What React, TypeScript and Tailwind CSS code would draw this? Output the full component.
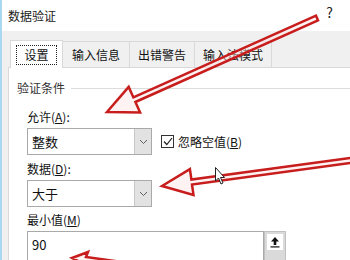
import React from "react";

const font = { fontFamily: '"Noto Sans CJK SC", "Noto Sans", sans-serif' };

function Chevron() {
  return (
    <svg width="9" height="6" viewBox="0 0 9 6">
      <path d="M1 1 L4.5 4.5 L8 1" fill="none" stroke="#606060" strokeWidth="1" />
    </svg>
  );
}

function Combo({ value }: { value: string }) {
  return (
    <div className="flex h-[27px] w-[125px] border border-[#a9a9a9] bg-white">
      <div className="flex-1 pl-[4px] flex items-center text-[13px] text-[#111]">{value}</div>
      <div className="w-[17px] bg-[#e2e2e2] border-l border-[#c8c8c8] flex items-center justify-center">
        <Chevron />
      </div>
    </div>
  );
}

export default function App() {
  return (
    <div
      className="relative w-[350px] h-[260px] overflow-hidden bg-[#f0f0f0] border-l-2 border-[#a8d8ef] text-[12px] text-[#111]"
      style={font}
    >
      <div className="h-[31px] bg-white flex items-center justify-between pl-[6px] pr-[17px]">
        <span className="text-[12px] text-[#222]">数据验证</span>
        <span className="text-[14px] text-[#222] -mt-[6px]">?</span>
      </div>
      <div className="pl-[6px] pt-[9px]">
        <div className="flex items-end h-[27px] pl-[2px]">
          <div className="h-[28px] w-[53px] bg-white border border-b-0 border-[#d9d9d9] flex items-center justify-center relative z-10 -mb-px">
            <span className="border border-dotted border-[#222] px-[7px] leading-[18px]">设置</span>
          </div>
          <div className="h-[26px] px-[9px] border-t border-r border-[#d9d9d9] flex items-center">输入信息</div>
          <div className="h-[26px] px-[8px] border-t border-r border-[#d9d9d9] flex items-center">出错警告</div>
          <div className="h-[26px] px-[8px] border-t border-r border-[#d9d9d9] flex items-center">输入法模式</div>
        </div>
        <div className="bg-white border-l border-t border-[#d9d9d9] h-[200px] pl-[8px] pt-[12px]">
          <div className="flex items-center h-[16px]">
            <span className="text-[#333]">验证条件</span>
            <div className="flex-1 h-px bg-[#dcdcdc] ml-[6px]"></div>
          </div>
          <div className="pl-[10px]">
            <div className="mt-[13px] h-[16px] flex items-center">允许(<u>A</u>):</div>
            <div className="flex items-center mt-[3px]">
              <Combo value="整数" />
              <div className="ml-[9px] w-[13px] h-[13px] border border-[#333] bg-white flex items-center justify-center">
                <svg width="10" height="9" viewBox="0 0 10 9">
                  <path d="M1 4.5 L3.8 7.5 L9 1" fill="none" stroke="#222" strokeWidth="1.2" />
                </svg>
              </div>
              <span className="ml-[4px]">忽略空值(<u>B</u>)</span>
            </div>
            <div className="mt-[6px] h-[16px] flex items-center">数据(<u>D</u>):</div>
            <div className="mt-[3px]">
              <Combo value="大于" />
            </div>
            <div className="mt-[5px] h-[16px] flex items-center">最小值(<u>M</u>)</div>
            <div className="mt-[3px] flex h-[30px] w-[259px]">
              <div className="flex-1 border border-[#a9a9a9] bg-white pl-[4px] pt-[3px] text-[13px]">90</div>
              <div className="w-[22px] bg-[#dadada] border border-[#c0c0c0] p-[2px]">
                <div className="bg-white h-[16px] flex items-center justify-center">
                  <svg width="10" height="12" viewBox="0 0 10 12">
                    <path d="M5 1 L9 5.5 L6.3 5.5 L6.3 9 L3.7 9 L3.7 5.5 L1 5.5 Z" fill="#111" />
                    <rect x="0.5" y="10.3" width="9" height="1.2" fill="#111" />
                  </svg>
                </div>
              </div>
            </div>
          </div>
        </div>
      </div>
      <svg className="absolute left-0 top-0 pointer-events-none" width="350" height="260" viewBox="0 0 350 260">
        <polygon
          points="105,112 138.1,112.5 133.4,102 316,20.3 314,15.7 131.4,97.4 126.7,86.9"
          fill="rgba(255,230,230,0.5)"
          stroke="#c81d1d"
          strokeWidth="2.5"
          strokeLinejoin="miter"
        />
        <polygon
          points="160,186 191.5,194.9 190,184.5 352.3,162.5 351.7,157.5 189.4,179.5 187.9,169.1"
          fill="rgba(255,230,230,0.5)"
          stroke="#c81d1d"
          strokeWidth="2.5"
        />
        <polygon
          points="70,258 86,252 84,257 120,262 84,262 86,266"
          fill="rgba(255,230,230,0.5)"
          stroke="#c81d1d"
          strokeWidth="2.5"
        />
        <path
          d="M213.5,167.5 L213.5,181 L216.5,178 L219,184 L221,183 L218.5,177.5 L222.5,177.5 Z"
          fill="white"
          stroke="#222"
          strokeWidth="1"
        />
      </svg>
    </div>
  );
}
